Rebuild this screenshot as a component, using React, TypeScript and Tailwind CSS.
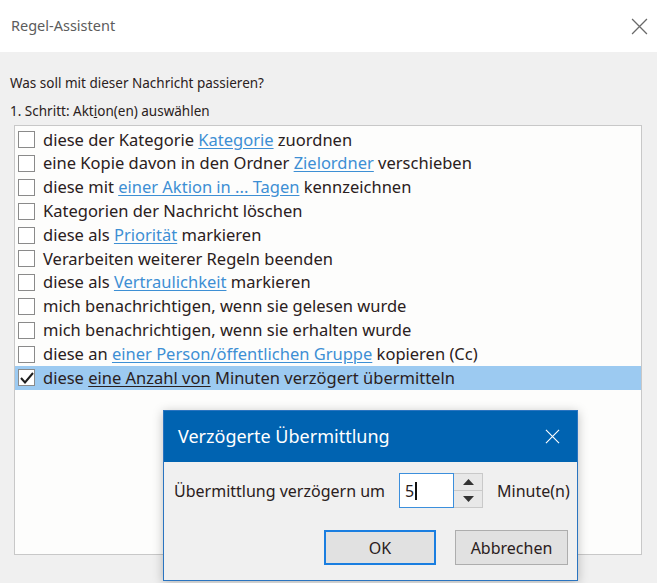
import React from 'react';

type Part = { t: string; link?: boolean };

const actions: Part[][] = [
  [{ t: 'diese der Kategorie ' }, { t: 'Kategorie', link: true }, { t: ' zuordnen' }],
  [{ t: 'eine Kopie davon in den Ordner ' }, { t: 'Zielordner', link: true }, { t: ' verschieben' }],
  [{ t: 'diese mit ' }, { t: 'einer Aktion in ... Tagen', link: true }, { t: ' kennzeichnen' }],
  [{ t: 'Kategorien der Nachricht löschen' }],
  [{ t: 'diese als ' }, { t: 'Priorität', link: true }, { t: ' markieren' }],
  [{ t: 'Verarbeiten weiterer Regeln beenden' }],
  [{ t: 'diese als ' }, { t: 'Vertraulichkeit', link: true }, { t: ' markieren' }],
  [{ t: 'mich benachrichtigen, wenn sie gelesen wurde' }],
  [{ t: 'mich benachrichtigen, wenn sie erhalten wurde' }],
  [{ t: 'diese an ' }, { t: 'einer Person/öffentlichen Gruppe', link: true }, { t: ' kopieren (Cc)' }],
  [{ t: 'diese ' }, { t: 'eine Anzahl von', link: true }, { t: ' Minuten verzögert übermitteln' }],
];

const font = { fontFamily: '"Segoe UI", "Noto Sans", "Open Sans", sans-serif' };

function Checkbox({ checked }: { checked?: boolean }) {
  return (
    <span className="flex h-[17px] w-[17px] shrink-0 items-center justify-center border border-[#8a8a8a] bg-white">
      {checked && (
        <svg width="14" height="12" viewBox="0 0 14 12">
          <path d="M1 6 L5 10.5 L13 1" fill="none" stroke="#1e1e1e" strokeWidth="2" />
        </svg>
      )}
    </span>
  );
}

function ActionRow({ parts, selected }: { parts: Part[]; selected?: boolean }) {
  return (
    <div className={`flex h-[23.8px] items-center gap-[8px] pl-[3px] ${selected ? 'bg-[#9ccaf1]' : ''}`}>
      <Checkbox checked={selected} />
      <span className="whitespace-nowrap text-[16.5px] text-[#2a2020]">
        {parts.map((p, i) =>
          p.link ? (
            <span
              key={i}
              className={`underline underline-offset-2 ${selected ? 'text-[#2a2020]' : 'text-[#3d8fd4]'}`}
            >
              {p.t}
            </span>
          ) : (
            <span key={i}>{p.t}</span>
          )
        )}
      </span>
    </div>
  );
}

function CloseIcon({ color, size }: { color: string; size: number }) {
  return (
    <svg width={size} height={size} viewBox="0 0 16 16">
      <path d="M1 1 L15 15 M15 1 L1 15" stroke={color} strokeWidth="1.2" fill="none" />
    </svg>
  );
}

export default function App() {
  return (
    <div className="relative h-[583px] w-[657px] overflow-hidden bg-[#f0f0f0]" style={font}>
      {/* window title */}
      <div className="flex h-[52px] items-center justify-between bg-white pl-[11px] pr-[9px]">
        <span className="text-[14.5px] text-[#5c5c5c]">Regel-Assistent</span>
        <CloseIcon color="#6a6a6a" size={17} />
      </div>

      <div className="flex h-[528px] flex-col pl-[10px] pr-[15px] pt-[20px]">
        <div className="text-[13.5px] leading-[22px] text-[#2a2020]">Was soll mit dieser Nachricht passieren?</div>
        <div className="mt-[6px] text-[13.5px] leading-[22px] text-[#2a2020]">
          1. Schritt: Akt<span className="underline">i</span>on(en) auswählen
        </div>
        <div className="ml-[4px] mt-[3px] h-[430px] border border-[#c8c8c8] bg-[#fdfdfc] pt-[2px]">
          {actions.map((parts, i) => (
            <ActionRow key={i} parts={parts} selected={i === actions.length - 1} />
          ))}
        </div>
      </div>

      {/* delay dialog */}
      <div className="absolute left-[163px] top-[410px] flex h-[171px] w-[415px] flex-col border border-[#2a74c0] bg-[#f0f0f0] shadow-[0_2px_10px_rgba(0,0,0,0.25)]">
        <div className="flex h-[51px] items-center justify-between bg-[#0063b1] pl-[14px] pr-[17px]">
          <span className="text-[18px] text-white">Verzögerte Übermittlung</span>
          <CloseIcon color="#ffffff" size={15} />
        </div>
        <div className="flex items-center pl-[10px] pt-[11px]">
          <span className="text-[16px] text-[#2a2020]">Übermittlung verzögern um</span>
          <div className="ml-[14px] flex h-[35px]">
            <div className="flex w-[55px] items-center border border-[#3c8fdc] bg-white pl-[5px] text-[16px] text-[#2a2020]">
              5<span className="ml-[1px] h-[18px] w-[2px] bg-[#111]" />
            </div>
            <div className="flex w-[29px] flex-col border border-l-0 border-[#c9c9c9] bg-[#e8e8e8]">
              <div className="flex flex-1 items-center justify-center border-b border-[#c9c9c9]">
                <svg width="11" height="6" viewBox="0 0 11 6"><path d="M0 6 L5.5 0 L11 6 Z" fill="#333" /></svg>
              </div>
              <div className="flex flex-1 items-center justify-center">
                <svg width="11" height="6" viewBox="0 0 11 6"><path d="M0 0 L5.5 6 L11 0 Z" fill="#333" /></svg>
              </div>
            </div>
          </div>
          <span className="ml-[14px] text-[16px] text-[#2a2020]">Minute(n)</span>
        </div>
        <div className="flex justify-end gap-[19px] pr-[9px] pt-[22px]">
          <button className="h-[35px] w-[112px] border-2 border-[#1a7ee0] bg-[#e1e1e1] text-[16px] text-[#2a2020]">OK</button>
          <button className="h-[35px] w-[113px] border border-[#adadad] bg-[#e1e1e1] text-[16px] text-[#2a2020]">Abbrechen</button>
        </div>
      </div>
    </div>
  );
}
